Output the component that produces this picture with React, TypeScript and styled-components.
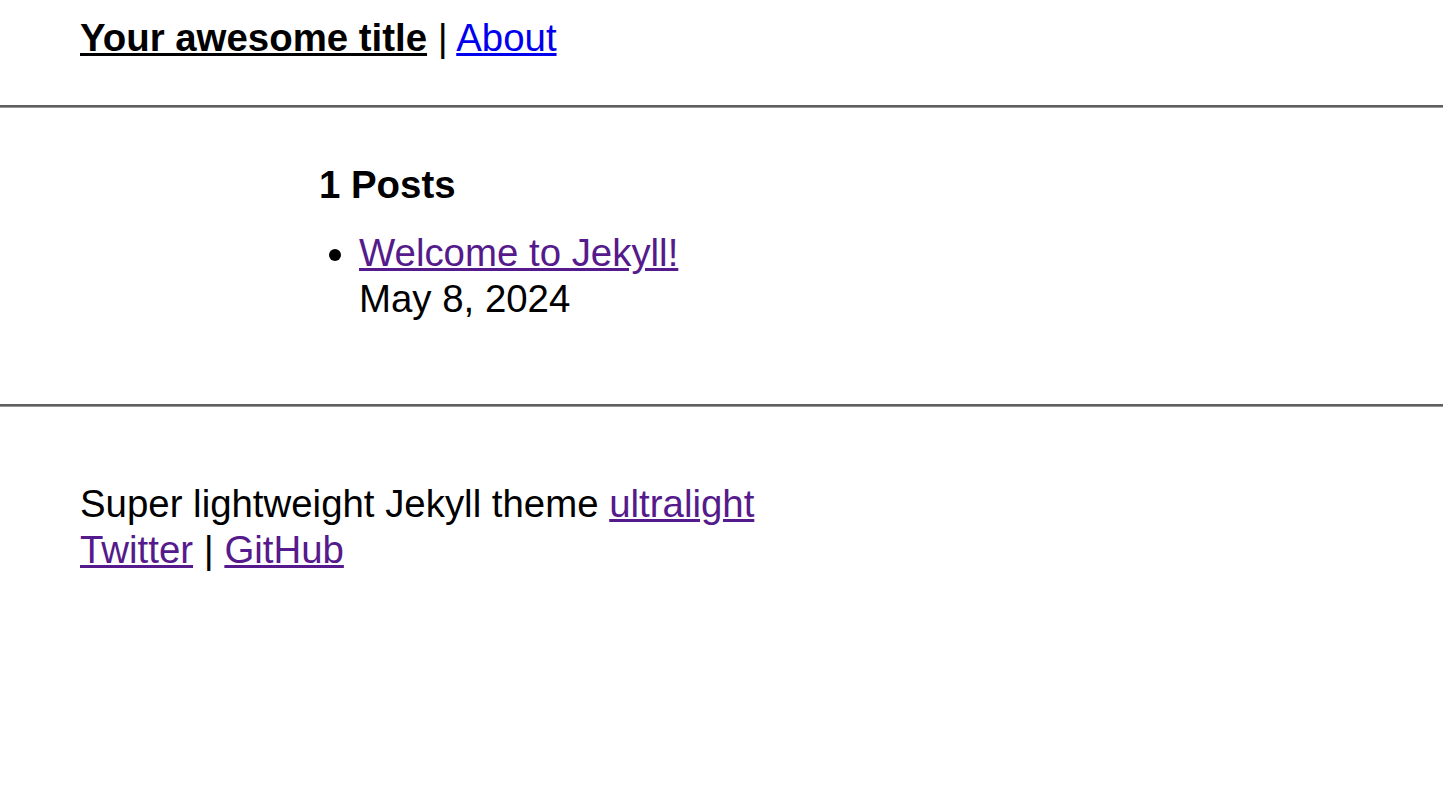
import React from 'react'
import styled, { createGlobalStyle } from 'styled-components'

const GlobalStyle = createGlobalStyle`
  body {
    margin: 0;
    background: #fff;
    color: #000;
    font-family: "Liberation Sans", Arial, Helvetica, sans-serif;
    font-size: 38.4px;
    line-height: 46px;
  }
`

const Header = styled.header`
  padding: 15px 80px 44px;
`
const SiteTitle = styled.a`
  color: #000;
  font-weight: bold;
  text-decoration: underline;
`
const Link = styled.a<{ $visited?: boolean }>`
  color: ${(p) => (p.$visited ? '#551a8b' : '#0000ee')};
  text-decoration: underline;
`
const Rule = styled.hr`
  margin: 0;
  height: 0;
  border: none;
  border-top: 2px solid #5f5f5f;
  border-bottom: 1px solid #969696;
`
const Main = styled.main`
  padding: 54px 0 82px 319px;
`
const Heading = styled.h2`
  margin: 0 0 22px;
  font-size: 38.4px;
  font-weight: bold;
`
const PostList = styled.ul`
  margin: 0;
  padding-left: 40px;
`
const PostItem = styled.li``
const PostDate = styled.div``
const Footer = styled.footer`
  padding: 74px 80px;
`

export default function App() {
  return (
    <>
      <GlobalStyle />
      <Header>
        <SiteTitle href="#">Your awesome title</SiteTitle> | <Link href="#">About</Link>
      </Header>
      <Rule />
      <Main>
        <Heading>1 Posts</Heading>
        <PostList>
          <PostItem>
            <Link $visited href="#">Welcome to Jekyll!</Link>
            <PostDate>May 8, 2024</PostDate>
          </PostItem>
        </PostList>
      </Main>
      <Rule />
      <Footer>
        <div>
          Super lightweight Jekyll theme <Link $visited href="#">ultralight</Link>
        </div>
        <div>
          <Link $visited href="#">Twitter</Link> | <Link $visited href="#">GitHub</Link>
        </div>
      </Footer>
    </>
  )
}
